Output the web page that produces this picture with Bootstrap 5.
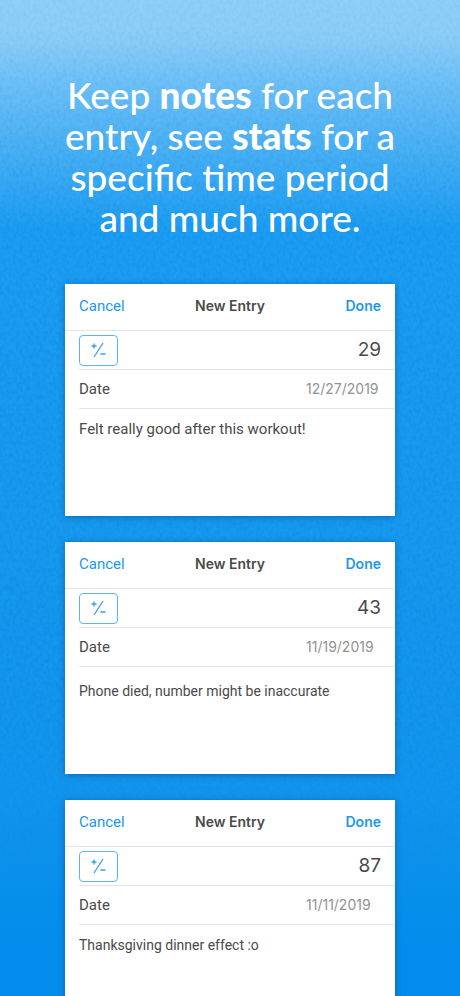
<!DOCTYPE html>
<html lang="en">
<head>
<meta charset="utf-8">
<meta name="viewport" content="width=device-width, initial-scale=1">
<title>Keep notes for each entry</title>
<link href="https://cdn.jsdelivr.net/npm/bootstrap@5.3.0/dist/css/bootstrap.min.css" rel="stylesheet">
<style>
  body { font-family: Roboto, "Liberation Sans", sans-serif; color: #4a4a4a; font-size: 15px; line-height: 20px; }
  .promo {
    height: 100vh;
    background: linear-gradient(#8fcff9 0, #8bcdf8 4%, #6fc1f7 8%, #1b9df3 23%, #169aef 50%, #1194ed 80%, #038ceb 95%, #038ceb 100%);
  }
  .paper-grain { z-index: 0; -webkit-mask-image: linear-gradient(#0006, #000 22%, #000 70%, #0000 88%); mask-image: linear-gradient(#0006, #000 22%, #000 70%, #0000 88%); }
  .promo-body { z-index: 1; padding: 74px 65px 0; }
  .headline { font-family: Lato, "Open Sans", sans-serif; font-size: 37px; line-height: 41px; font-weight: 500; margin: 0 -16px 46px; }
  .headline strong { font-weight: 900; }
  .entries { gap: 26px; }
  .entry { height: 232px; box-shadow: 0 1px 6px rgba(0, 50, 100, .45); }
  .entry-bar { height: 47px; padding: 0 14px 2px; border-bottom: 1px solid #e4e5e6; }
  .entry-bar button { color: #1b97f0; width: 72px; }
  .entry-title, .entry-bar .done-btn { font-family: Inter, sans-serif; font-size: 14px; line-height: 20px; }
  .entry-line { height: 39px; margin-left: 14px; padding-right: 14px; border-bottom: 1px solid #e4e4e5; }
  .entry input, .entry textarea { color: inherit; background: none; outline: 0; }
  .sign-btn { width: 39px; height: 31px; color: #3b9ee8; border: 1px solid #5db4f3; border-radius: 4px; }
  .entry .amount { font-family: Inter, sans-serif; font-size: 19px; line-height: 24px; }
  .entry .date-value { font-family: Inter, sans-serif; width: 75px; color: #929292; font-size: 14px; white-space: nowrap; }
  .note { resize: none; padding: 10px 14px 0; font-size: 15px; overflow: hidden; }
  .note-compact { font-size: 14px; }
  .note-spaced { padding-top: 14px; }
</style>
<script src="https://cdn.jsdelivr.net/npm/bootstrap@5.3.0/dist/js/bootstrap.bundle.min.js"></script>
</head>
<body>
<main class="promo position-relative overflow-hidden">
  <svg class="paper-grain position-absolute top-0 start-0 w-100 h-100" aria-hidden="true">
    <filter id="grain" x="0" y="0" width="100%" height="100%" color-interpolation-filters="sRGB">
      <feTurbulence type="fractalNoise" baseFrequency=".3 .22" numOctaves="3" seed="7" result="n"/>
      <feColorMatrix in="n" values="0 0 0 0 0  0 0 0 0 .3  0 0 0 0 .6  1.5 0 0 0 -.6"/>
    </filter>
    <rect width="100%" height="100%" filter="url(#grain)" opacity=".17"/>
  </svg>

  <div class="promo-body position-relative">
    <h1 class="headline text-white text-center">Keep <strong>notes</strong> for each<br>entry, see <strong>stats</strong> for a<br>specific time period<br>and much more.</h1>

    <div class="entries d-flex flex-column">
      <form class="entry bg-white d-flex flex-column flex-shrink-0">
        <div class="entry-bar d-flex align-items-center justify-content-between">
          <button type="button" class="border-0 bg-transparent p-0 text-start">Cancel</button>
          <h2 class="entry-title fw-semibold m-0">New Entry</h2>
          <button type="button" class="done-btn border-0 bg-transparent p-0 text-end fw-semibold">Done</button>
        </div>
        <div class="entry-line d-flex align-items-center justify-content-between">
          <button type="button" class="sign-btn bg-transparent p-0 d-flex flex-shrink-0 align-items-center justify-content-center" aria-label="Plus or minus">
            <svg width="16" height="16" viewBox="0 0 16 16" fill="none" stroke="currentColor" stroke-width="1.3"><path d="M3 1.5v5M.5 4h5M12 1L3 15M9.5 12h5"/></svg>
          </button>
          <input type="text" class="amount border-0 p-0 text-end w-50" aria-label="Amount" value="29">
        </div>
        <div class="entry-line d-flex align-items-center justify-content-between">
          <label for="date1">Date</label>
          <input type="text" id="date1" class="date-value border-0 p-0" value="12/27/2019">
        </div>
        <textarea class="note border-0 w-100 flex-grow-1" aria-label="Notes">Felt really good after this workout!</textarea>
      </form>

      <form class="entry bg-white d-flex flex-column flex-shrink-0">
        <div class="entry-bar d-flex align-items-center justify-content-between">
          <button type="button" class="border-0 bg-transparent p-0 text-start">Cancel</button>
          <h2 class="entry-title fw-semibold m-0">New Entry</h2>
          <button type="button" class="done-btn border-0 bg-transparent p-0 text-end fw-semibold">Done</button>
        </div>
        <div class="entry-line d-flex align-items-center justify-content-between">
          <button type="button" class="sign-btn bg-transparent p-0 d-flex flex-shrink-0 align-items-center justify-content-center" aria-label="Plus or minus">
            <svg width="16" height="16" viewBox="0 0 16 16" fill="none" stroke="currentColor" stroke-width="1.3"><path d="M3 1.5v5M.5 4h5M12 1L3 15M9.5 12h5"/></svg>
          </button>
          <input type="text" class="amount border-0 p-0 text-end w-50" aria-label="Amount" value="43">
        </div>
        <div class="entry-line d-flex align-items-center justify-content-between">
          <label for="date2">Date</label>
          <input type="text" id="date2" class="date-value border-0 p-0" value="11/19/2019">
        </div>
        <textarea class="note note-compact note-spaced border-0 w-100 flex-grow-1" aria-label="Notes">Phone died, number might be inaccurate</textarea>
      </form>

      <form class="entry bg-white d-flex flex-column flex-shrink-0">
        <div class="entry-bar d-flex align-items-center justify-content-between">
          <button type="button" class="border-0 bg-transparent p-0 text-start">Cancel</button>
          <h2 class="entry-title fw-semibold m-0">New Entry</h2>
          <button type="button" class="done-btn border-0 bg-transparent p-0 text-end fw-semibold">Done</button>
        </div>
        <div class="entry-line d-flex align-items-center justify-content-between">
          <button type="button" class="sign-btn bg-transparent p-0 d-flex flex-shrink-0 align-items-center justify-content-center" aria-label="Plus or minus">
            <svg width="16" height="16" viewBox="0 0 16 16" fill="none" stroke="currentColor" stroke-width="1.3"><path d="M3 1.5v5M.5 4h5M12 1L3 15M9.5 12h5"/></svg>
          </button>
          <input type="text" class="amount border-0 p-0 text-end w-50" aria-label="Amount" value="87">
        </div>
        <div class="entry-line d-flex align-items-center justify-content-between">
          <label for="date3">Date</label>
          <input type="text" id="date3" class="date-value border-0 p-0" value="11/11/2019">
        </div>
        <textarea class="note note-compact border-0 w-100 flex-grow-1" aria-label="Notes">Thanksgiving dinner effect :o</textarea>
      </form>
    </div>
  </div>
</main>
</body>
</html>
